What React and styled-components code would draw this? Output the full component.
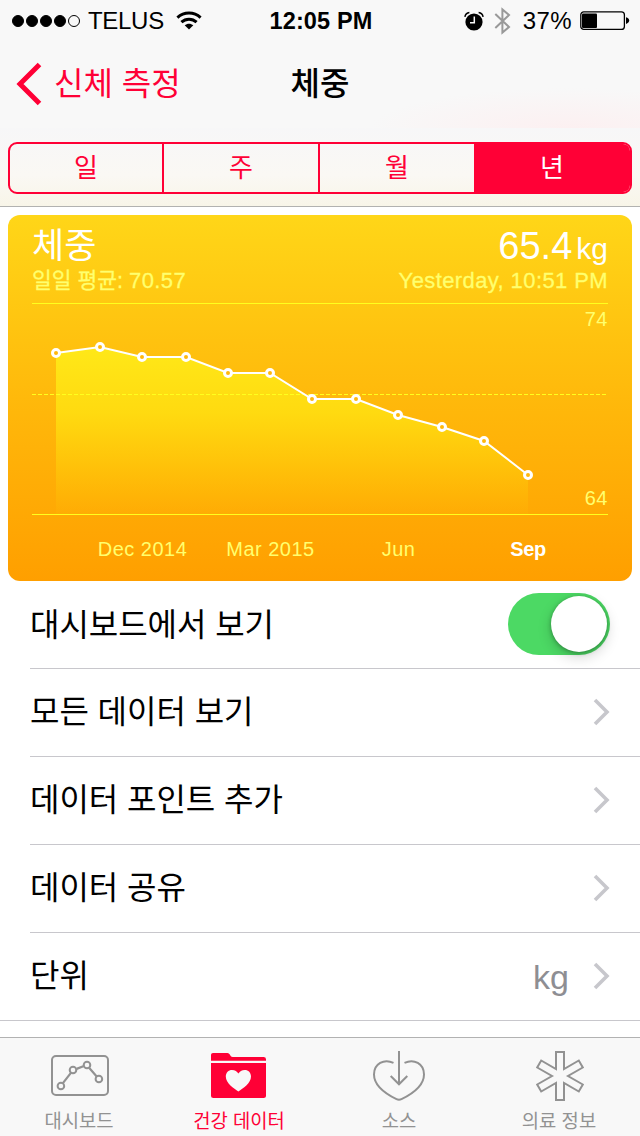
import React from 'react';
import styled, { createGlobalStyle } from 'styled-components';

const points = [
  [24, 50],
  [68, 44],
  [110, 54],
  [154, 54],
  [196, 70],
  [238, 70],
  [280, 96],
  [324, 96],
  [366, 112],
  [410, 124],
  [452, 138],
  [496, 172],
];

const months = [
  { x: 110.5, label: 'Dec 2014' },
  { x: 238.5, label: 'Mar 2015' },
  { x: 366.5, label: 'Jun' },
  { x: 496, label: 'Sep', active: true },
];

const ranges = ['일', '주', '월', '년'];

const rows = [
  { label: '모든 데이터 보기' },
  { label: '데이터 포인트 추가' },
  { label: '데이터 공유' },
  { label: '단위', value: 'kg', last: true },
];

function WifiIcon() {
  return (
    <svg width="26" height="19" viewBox="0 0 26 19">
      <g fill="none" stroke="#000" strokeWidth="3">
        <path d="M1.4 6.6C8 .6 18 .6 24.6 6.6" />
        <path d="M5.4 11.2c4.4-4 10.8-4 15.2 0" />
      </g>
      <path d="M8.7 14.3c2.6-2.2 6-2.2 8.6 0L13 18.6z" />
    </svg>
  );
}

function AlarmIcon() {
  return (
    <svg width="20" height="20" viewBox="0 0 20 20">
      <circle cx="10" cy="11" r="8.6" />
      <g fill="none" stroke="#000" strokeWidth="1.5">
        <path d="M.9 5.8C1.3 3.4 3 1.8 5.4 1.5" />
        <path d="M19.1 5.8C18.7 3.4 17 1.8 14.6 1.5" />
      </g>
      <path d="M10.3 5.5v6.2H6" fill="none" stroke="#f8f8f8" strokeWidth="1.5" />
    </svg>
  );
}

function BluetoothIcon() {
  return (
    <svg width="17" height="28" viewBox="0 0 17 28">
      <path
        d="M1.3 7L15 20l-6.6 5.6V2.4L15 8 1.3 21"
        fill="none"
        stroke="#999"
        strokeWidth="2"
      />
    </svg>
  );
}

function BatteryIcon() {
  return (
    <svg width="50" height="20" viewBox="0 0 50 20">
      <rect x="0.8" y="0.8" width="43.6" height="17.6" rx="3" fill="none" stroke="#000" strokeWidth="1.3" />
      <rect x="2" y="2.5" width="15" height="14.5" rx="1" />
      <path d="M46 6.2c2 .6 3.2 1.8 3.2 3.4S48 12.400 46 13z" />
    </svg>
  );
}

function DashboardIcon() {
  return (
    <svg width="60" height="52" viewBox="0 0 60 52" fill="none" stroke="#929292" strokeWidth="2">
      <rect x="2" y="6" width="56" height="39" rx="4" />
      <path d="M12.900 33.200L20.900 22.800M26.600 18.900L33.300 16.300M39.300 18L46.700 26.400" strokeWidth="2.200" />
      <circle cx="10.900" cy="36" r="3.300" />
      <circle cx="23" cy="20" r="3.300" />
      <circle cx="37" cy="15" r="3.300" />
      <circle cx="48.900" cy="29" r="3.300" />
    </svg>
  );
}

function FolderIcon() {
  return (
    <svg width="60" height="52" viewBox="0 0 60 52">
      <g fill="#ff0036">
        <path d="M1 10.700V4.800Q1 2.900 3 2.900H17.500Q19 2.900 19.800 4.400L20.700 6Q21.400 7 22.800 7H53.500Q56 7 56 9.200V10.700Z" />
        <path d="M1 13H56V45.500Q56 48 53.500 48H3.500Q1 48 1 45.500Z" />
      </g>
      <path
        d="M28.400 41.600C24 38.600 15.800 33.500 15.800 26.600C15.800 22.600 18.500 20 22 20C25 20 27.200 21.500 28.400 23.600C29.600 21.500 31.800 20 34.800 20C38.300 20 41 22.600 41 26.600C41 33.500 32.800 38.600 28.400 41.600Z"
        fill="#f8f8f8"
      />
    </svg>
  );
}

function SourceIcon() {
  return (
    <svg width="60" height="52" viewBox="0 0 60 52" fill="none" stroke="#929292" strokeWidth="2">
      <path d="M23.500 12.800C14 8.400 4 13.500 4 24.500C4 36 17 44.500 26.500 49.200Q29 50.400 31.500 49.200C41 44.500 54 36 54 24.500C54 13.500 44 8.400 34.500 12.800" />
      <path d="M29 1V34.300M20.700 26L29 34.300L37.300 26" />
    </svg>
  );
}

function MedicalIcon() {
  return (
    <svg width="60" height="52" viewBox="0 0 60 52" fill="none" stroke="#929292" strokeWidth="2">
      <path d="M26 2H34V19.100L48.800 10.500L52.800 17.500L38 26L52.800 34.500L48.800 41.500L34 32.900V50H26V32.900L11.200 41.500L7.200 34.500L22 26L7.200 17.500L11.200 10.500L26 19.100Z" />
    </svg>
  );
}

function Chart() {
  const line = points.map(p => p.join(',')).join(' ');
  return (
    <ChartSvg viewBox="0 0 576 278">
      <defs>
        <linearGradient id="area" gradientUnits="userSpaceOnUse" x1="0" y1="44" x2="0" y2="211">
          <stop offset="0" stopColor="#ffe818" />
          <stop offset="0.4" stopColor="#ffda10" />
          <stop offset="1" stopColor="#ffcc08" stopOpacity="0.08" />
        </linearGradient>
      </defs>
      <polygon points={`24,211 ${line} 496,211`} fill="url(#area)" />
      <path d="M0 .5H576M0 211.500H576" stroke="#ffff1e" />
      <path d="M0 91.500H575" stroke="#ffff1e" strokeDasharray="4 2" />
      <polyline points={line} fill="none" stroke="#fff" strokeWidth="2" />
      {points.map(([x, y]) => (
        <circle key={x} cx={x} cy={y} r="3.5" fill="#ffb80c" stroke="#fff" strokeWidth="3" />
      ))}
      <AxisText x="576" y="23" textAnchor="end">
        74
      </AxisText>
      <AxisText x="576" y="202" textAnchor="end">
        64
      </AxisText>
      {months.map(({ x, label, active }) => (
        <AxisText key={label} x={x} y="253" textAnchor="middle" $active={active}>
          {label}
        </AxisText>
      ))}
    </ChartSvg>
  );
}

const tabs = [
  { label: '대시보드', Icon: DashboardIcon },
  { label: '건강 데이터', Icon: FolderIcon, active: true },
  { label: '소스', Icon: SourceIcon },
  { label: '의료 정보', Icon: MedicalIcon },
];

function App() {
  return (
    <Screen>
      <GlobalStyle />
      <Header>
        <StatusBar>
          <StatusSide>
            <Signal>
              <Dot $on />
              <Dot $on />
              <Dot $on />
              <Dot $on />
              <Dot />
            </Signal>
            <Carrier>TELUS</Carrier>
            <WifiIcon />
          </StatusSide>
          <Clock>12:05 PM</Clock>
          <StatusSide $end>
            <StatusIcons>
              <AlarmIcon />
              <BluetoothIcon />
            </StatusIcons>
            <Percent>37%</Percent>
            <BatteryIcon />
          </StatusSide>
        </StatusBar>
        <NavBar>
          <BackButton>
            <svg width="26" height="44" viewBox="0 0 26 44">
              <path d="M23.500 2.500L4 22L23.500 41.500" fill="none" stroke="#ff0036" strokeWidth="5" />
            </svg>
            <span>신체 측정</span>
          </BackButton>
          <Title>체중</Title>
        </NavBar>
        <SegmentBar>
          <Segments>
            {ranges.map(range => (
              <Segment key={range} $active={range === '년'}>
                {range}
              </Segment>
            ))}
          </Segments>
        </SegmentBar>
      </Header>
      <Content>
        <Card>
          <CardTop>
            <CardName>체중</CardName>
            <CardValue>
              65.4<small>kg</small>
            </CardValue>
          </CardTop>
          <CardSub>
            <span>
              일일 평균: <em>70.57</em>
            </span>
            <em>Yesterday, 10:51 PM</em>
          </CardSub>
          <Chart />
        </Card>
        <List>
          <Row>
            <RowLabel $first>대시보드에서 보기</RowLabel>
            <Toggle>
              <Knob />
            </Toggle>
          </Row>
          {rows.map(({ label, value, last }) => (
            <Row key={label} $last={last}>
              <RowLabel>{label}</RowLabel>
              <RowEnd>
                {value && <Unit>{value}</Unit>}
                <svg width="17" height="28" viewBox="0 0 17 28">
                  <path d="M2 2L14 14L2 26" fill="none" stroke="#c7c7cc" strokeWidth="3.600" />
                </svg>
              </RowEnd>
            </Row>
          ))}
        </List>
      </Content>
      <TabBar>
        {tabs.map(({ label, Icon, active }) => (
          <Tab key={label} $active={active}>
            <Icon />
            <span>{label}</span>
          </Tab>
        ))}
      </TabBar>
    </Screen>
  );
}

const GlobalStyle = createGlobalStyle`
  * {
    box-sizing: border-box;
  }
  body {
    margin: 0;
    background: #fff;
    font-family: 'Liberation Sans', 'Noto Sans CJK KR', sans-serif;
    color: #000;
  }
  svg {
    display: block;
    flex: none;
  }
`;

const Screen = styled.div`
  display: flex;
  flex-direction: column;
  width: 640px;
  height: 1136px;
  overflow: hidden;
`;

const Header = styled.header`
  height: 207px;
  border-bottom: 1px solid #b2b2b0;
  background: #f8f8f8;
`;

const StatusBar = styled.div`
  display: grid;
  grid-template-columns: 1fr auto 1fr;
  align-items: center;
  height: 40px;
  padding: 0 10px 0 12px;
  font-size: 24px;
  line-height: 40px;
`;

const StatusSide = styled.div`
  display: flex;
  align-items: center;
  height: 40px;
  justify-content: ${props => (props.$end ? 'flex-end' : 'flex-start')};
`;

const Signal = styled.div`
  display: flex;
  gap: 2px;
  padding-top: 1px;
`;

const Dot = styled.i`
  width: 12px;
  height: 12px;
  border: 1px solid #000;
  border-radius: 50%;
  background: ${props => (props.$on ? '#000' : 'transparent')};
`;

const Carrier = styled.span`
  margin: 1px 12px 0 8px;
  letter-spacing: -0.3px;
`;

const Clock = styled.div`
  padding-top: 1px;
  font-weight: bold;
  font-size: 23.5px;
  letter-spacing: 0.15px;
`;

const StatusIcons = styled.div`
  display: flex;
  align-items: center;
  gap: 10px;
`;

const Percent = styled.span`
  margin: 1px 8px 0 12px;
  letter-spacing: 0.4px;
`;

const NavBar = styled.nav`
  display: grid;
  grid-template-columns: 1fr auto 1fr;
  align-items: center;
  height: 88px;
  padding: 0 16px;
  font-size: 32px;
  line-height: 48px;
  background: radial-gradient(ellipse 200px 40px at 570px 100%, #fcf0f1, #f8f8f800);
`;

const BackButton = styled.div`
  display: flex;
  align-items: center;
  gap: 12px;
  color: #ff0036;
`;

const Title = styled.h1`
  margin: 0;
  padding-bottom: 6px;
  font-size: 32px;
  font-weight: 500;
  font-family: 'Noto Sans CJK KR', sans-serif;
`;

const SegmentBar = styled.div`
  height: 78px;
  padding: 14px 8px 0;
  background: linear-gradient(#f7f7f8, #faf8f4 60%, #f8f5e8);
`;

const Segments = styled.div`
  display: grid;
  grid-template-columns: 154px 156px 154px 156px;
  height: 52px;
  border: 2px solid #ff0036;
  border-radius: 9px;
  overflow: hidden;
`;

const Segment = styled.div`
  border-right: ${props => (props.$active ? 0 : '2px solid #ff0036')};
  background: ${props => (props.$active ? '#ff0036' : 'transparent')};
  color: ${props => (props.$active ? '#fff' : '#ff0036')};
  font-size: 26px;
  line-height: 48px;
  text-align: center;
  &:nth-child(3) {
    border-right: 0;
  }
`;

const Content = styled.main`
  flex: 1;
  padding-top: 8px;
`;

const Card = styled.section`
  height: 366px;
  margin: 0 8px;
  padding: 8px 24px 0;
  border-radius: 12px;
  background: linear-gradient(#ffd618, #ffb90b 50%, #ff9f00);
  overflow: hidden;
`;

const CardTop = styled.div`
  display: flex;
  justify-content: space-between;
  height: 44px;
  color: #fff;
`;

const CardName = styled.span`
  font-size: 35px;
  line-height: 46px;
`;

const CardValue = styled.span`
  font-size: 38px;
  line-height: 47px;
  small {
    margin-left: 4px;
    font-size: 30px;
  }
`;

const CardSub = styled.div`
  display: flex;
  justify-content: space-between;
  height: 36px;
  color: #ffff6e;
  font-size: 21.5px;
  line-height: 27px;
  -webkit-text-stroke: 0.3px #ffff6e;
  em {
    font-size: 22px;
    font-style: normal;
    letter-spacing: 0.4px;
  }
`;

const ChartSvg = styled.svg`
  width: 576px;
  height: 278px;
`;

const AxisText = styled.text`
  fill: ${props => (props.$active ? '#fff' : '#ffff6e')};
  font-size: 20px;
  font-weight: ${props => (props.$active ? 'bold' : 'normal')};
  letter-spacing: ${props => (props.$active ? '-0.4px' : '0.5px')};
`;

const List = styled.div`
  padding-left: 30px;
`;

const Row = styled.div`
  display: flex;
  justify-content: space-between;
  align-items: center;
  height: 88px;
  /* the last line runs the full width of the screen */
  margin-left: ${props => (props.$last ? '-30px' : 0)};
  padding: 0 30px 2px ${props => (props.$last ? '30px' : 0)};
  border-bottom: 1px solid #c8c7cc;
  font-size: 32px;
  line-height: 48px;
`;

const RowLabel = styled.span`
  padding-top: ${props => (props.$first ? '2px' : 0)};
  letter-spacing: -0.05px;
`;

const RowEnd = styled.div`
  display: flex;
  align-items: center;
`;

const Unit = styled.span`
  margin-right: 24px;
  padding-top: 2px;
  color: #8e8e93;
  font-size: 34px;
`;

const Toggle = styled.div`
  display: flex;
  justify-content: flex-end;
  width: 102px;
  height: 62px;
  padding: 3px;
  border-radius: 31px;
  background: #4cd964;
`;

const Knob = styled.div`
  width: 56px;
  height: 56px;
  border-radius: 50%;
  background: #fff;
  box-shadow: 0 5px 14px rgba(0, 0, 0, 0.18), 0 1px 4px rgba(0, 0, 0, 0.3);
`;

const TabBar = styled.footer`
  display: grid;
  grid-template-columns: repeat(4, 1fr);
  height: 99px;
  border-top: 1px solid #b2b2b2;
  background: #f8f8f8;
`;

const Tab = styled.div`
  display: flex;
  flex-direction: column;
  align-items: center;
  padding-top: 12px;
  color: ${props => (props.$active ? '#ff0036' : '#929292')};
  font-size: 18.8px;
  line-height: 28px;
  span {
    padding: 6px 2px 0 0;
  }
`;

export default App;
